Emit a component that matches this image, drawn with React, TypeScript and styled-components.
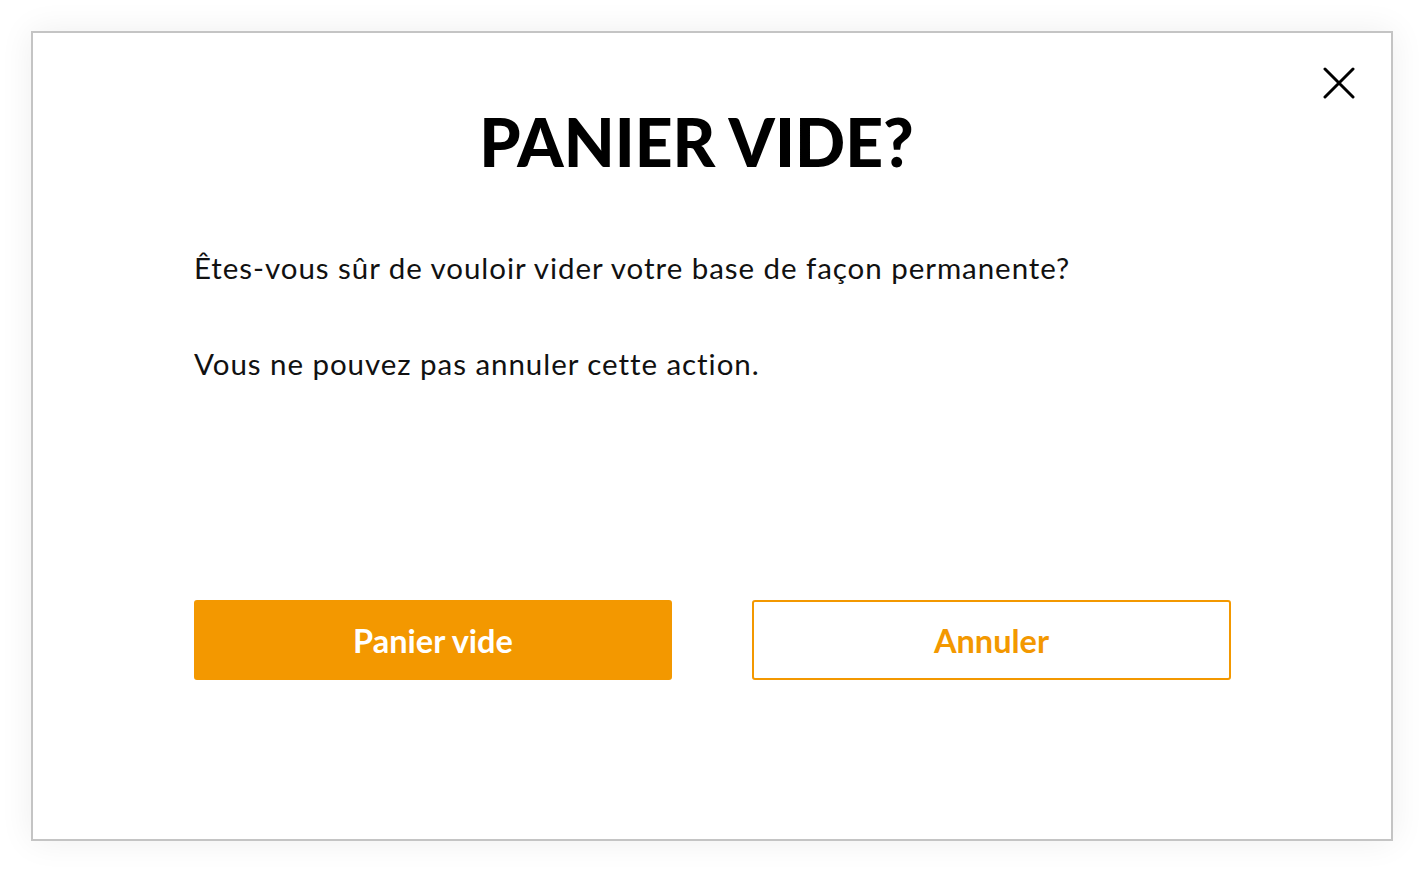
import styled, { createGlobalStyle } from "styled-components";

const GlobalStyle = createGlobalStyle`
  html, body {
    margin: 0;
    padding: 0;
    background: #ffffff;
    font-family: Lato, "Noto Sans", sans-serif;
  }
`;

const ORANGE = "#f39800";

const Page = styled.div`
  padding: 31px;
  box-sizing: border-box;
  width: 1424px;
  height: 872px;
`;

const Modal = styled.div`
  position: relative;
  box-sizing: border-box;
  height: 810px;
  border: 2px solid #c4c4c4;
  background: #fff;
  box-shadow: 0 0 32px rgba(0, 0, 0, 0.07);
  padding: 76px 160px 0 161px;
  display: flex;
  flex-direction: column;
`;

const CloseButton = styled.button`
  position: absolute;
  top: 34px;
  right: 36px;
  width: 32px;
  height: 32px;
  padding: 0;
  border: 0;
  background: none;
  cursor: pointer;
`;

const Title = styled.h1`
  margin: 0;
  padding-right: 32px;
  font-size: 66px;
  line-height: 1;
  font-weight: 900;
  text-align: center;
  color: #000;
`;

const Message = styled.p<{ $gap: number }>`
  margin: ${(p) => p.$gap}px 0 0;
  font-size: 29.5px;
  line-height: 1;
  letter-spacing: 0.95px;
  color: #111;
`;

const Actions = styled.div`
  margin-top: 222px;
  display: grid;
  grid-template-columns: 478px 479px;
  column-gap: 80px;
`;

const ActionButton = styled.button<{ $primary?: boolean }>`
  height: 80px;
  box-sizing: border-box;
  border-radius: 3px;
  border: 2px solid ${ORANGE};
  background: ${(p) => (p.$primary ? ORANGE : "#fff")};
  color: ${(p) => (p.$primary ? "#fff" : ORANGE)};
  font-family: Lato, "Noto Sans", sans-serif;
  font-size: 32.5px;
  font-weight: 700;
  cursor: pointer;
`;

export default function App() {
  return (
    <>
      <GlobalStyle />
      <Page>
        <Modal>
          <CloseButton aria-label="Fermer">
            <svg width="32" height="32" viewBox="0 0 32 32">
              <path d="M2 2 L30 30 M30 2 L2 30" stroke="#000" strokeWidth="3" strokeLinecap="round" fill="none" />
            </svg>
          </CloseButton>
          <Title>PANIER VIDE?</Title>
          <Message $gap={78}>Êtes-vous sûr de vouloir vider votre base de façon permanente?</Message>
          <Message $gap={66}>Vous ne pouvez pas annuler cette action.</Message>
          <Actions>
            <ActionButton $primary>Panier vide</ActionButton>
            <ActionButton>Annuler</ActionButton>
          </Actions>
        </Modal>
      </Page>
    </>
  );
}
